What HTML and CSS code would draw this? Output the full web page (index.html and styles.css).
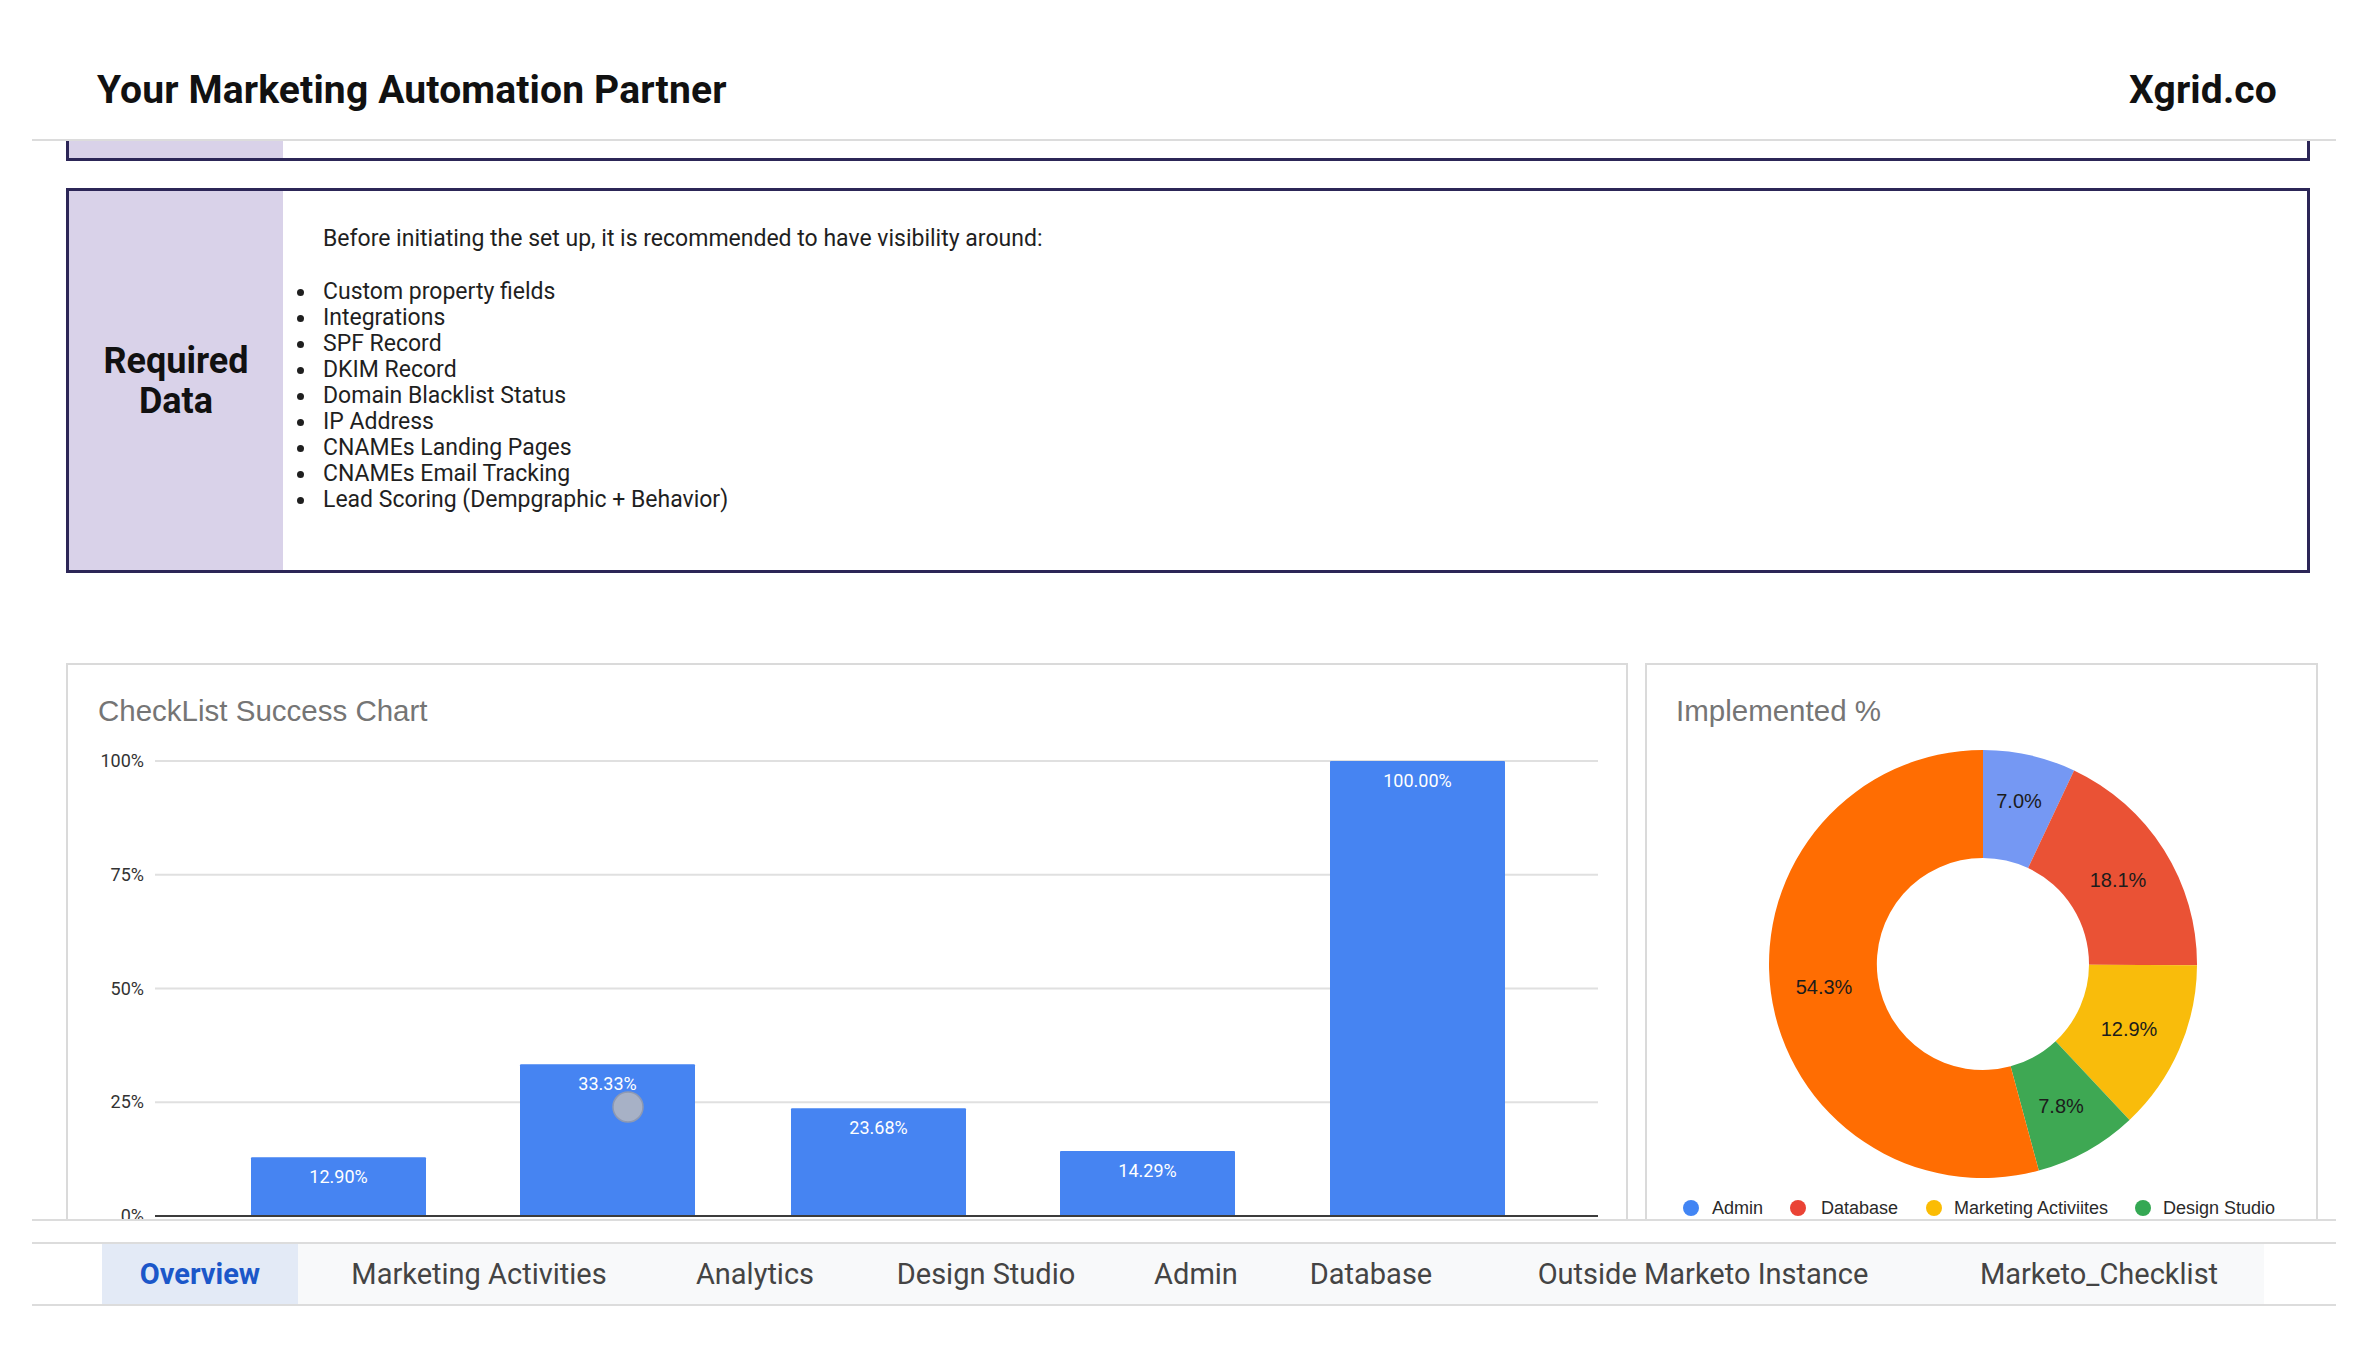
FILE: index.html
```html
<!DOCTYPE html>
<html lang="en">
<head>
<meta charset="utf-8">
<title>Your Marketing Automation Partner</title>
<link rel="stylesheet" href="styles.css">
</head>
<body>
<header class="top">
  <h1 class="top__title">Your Marketing Automation Partner</h1>
  <div class="top__brand">Xgrid.co</div>
</header>

<main class="sheet">
  <div class="box box--cut">
    <div class="box__label"></div>
    <div class="box__body"></div>
  </div>

  <section class="box box--req">
    <div class="box__label"><span>Required<br>Data</span></div>
    <div class="box__body">
      <p class="box__intro">Before initiating the set up, it is recommended to have visibility around:</p>
      <ul class="box__list">
        <li>Custom property fields</li>
        <li>Integrations</li>
        <li>SPF Record</li>
        <li>DKIM Record</li>
        <li>Domain Blacklist Status</li>
        <li>IP Address</li>
        <li>CNAMEs Landing Pages</li>
        <li>CNAMEs Email Tracking</li>
        <li>Lead Scoring (Dempgraphic + Behavior)</li>
      </ul>
    </div>
  </section>

  <div class="charts">
    <section class="card card--bar">
      <h2 class="card__title">CheckList Success Chart</h2>
      <svg class="card__svg" width="1558" height="520" viewBox="0 0 1558 520">
        <g class="grid">
          <line x1="87" y1="32" x2="1530" y2="32"/>
          <line x1="87" y1="145.75" x2="1530" y2="145.75"/>
          <line x1="87" y1="259.5" x2="1530" y2="259.5"/>
          <line x1="87" y1="373.25" x2="1530" y2="373.25"/>
        </g>
        <g class="axis">
          <text x="76" y="38">100%</text>
          <text x="76" y="151.75">75%</text>
          <text x="76" y="265.5">50%</text>
          <text x="76" y="379.25">25%</text>
          <text x="76" y="493">0%</text>
        </g>
        <g class="bars">
          <rect x="183" y="428.3" width="175" height="58.7" rx="1"/>
          <rect x="452" y="335.3" width="175" height="151.7" rx="1"/>
          <rect x="723" y="379.3" width="175" height="107.7" rx="1"/>
          <rect x="992" y="422" width="175" height="65" rx="1"/>
          <rect x="1262" y="32" width="175" height="455" rx="1"/>
        </g>
        <g class="barlabels">
          <text x="270.5" y="454">12.90%</text>
          <text x="539.5" y="361">33.33%</text>
          <text x="810.5" y="405">23.68%</text>
          <text x="1079.5" y="448">14.29%</text>
          <text x="1349.5" y="58">100.00%</text>
        </g>
        <line class="zero" x1="87" y1="487" x2="1530" y2="487"/>
        <circle class="cursor" cx="560" cy="378" r="15"/>
      </svg>
    </section>

    <section class="card card--pie">
      <h2 class="card__title">Implemented %</h2>
      <svg class="card__svg" width="669" height="520" viewBox="0 0 669 520">
        <path class="s-admin" d="M336 21 A214 214 0 0 1 427.1 41.4 L381.1 139.1 A106 106 0 0 0 336 129 Z"/>
        <path class="s-db" d="M427.1 41.4 A214 214 0 0 1 550 236.3 L442 235.7 A106 106 0 0 0 381.1 139.1 Z"/>
        <path class="s-mkt" d="M550 236.3 A214 214 0 0 1 482.5 391 L408.6 312.3 A106 106 0 0 0 442 235.7 Z"/>
        <path class="s-ds" d="M482.5 391 A214 214 0 0 1 391.8 441.6 L363.6 337.3 A106 106 0 0 0 408.6 312.3 Z"/>
        <path class="s-other" d="M391.8 441.6 A214 214 0 1 1 336 21 L336 129 A106 106 0 1 0 363.6 337.3 Z"/>
        <g class="slicelabels">
          <text x="372" y="79">7.0%</text>
          <text x="471" y="158">18.1%</text>
          <text x="482" y="307">12.9%</text>
          <text x="414" y="384">7.8%</text>
          <text x="177" y="265">54.3%</text>
        </g>
        <g class="legend">
          <circle cx="44" cy="479" r="8" fill="#4285f4"/>
          <text x="65" y="485">Admin</text>
          <circle cx="151" cy="479" r="8" fill="#ea4335"/>
          <text x="174" y="485">Database</text>
          <circle cx="287" cy="479" r="8" fill="#fbbc04"/>
          <text x="307" y="485">Marketing Activiites</text>
          <circle cx="496" cy="479" r="8" fill="#34a853"/>
          <text x="516" y="485">Design Studio</text>
        </g>
      </svg>
    </section>
  </div>
</main>

<nav class="tabs">
  <div class="tabs__list">
    <div class="tab tab--active">Overview</div>
    <div class="tab">Marketing Activities</div>
    <div class="tab">Analytics</div>
    <div class="tab">Design Studio</div>
    <div class="tab">Admin</div>
    <div class="tab">Database</div>
    <div class="tab">Outside Marketo Instance</div>
    <div class="tab">Marketo_Checklist</div>
  </div>
</nav>
</body>
</html>
```

FILE: styles.css
```css
* { box-sizing: border-box; }

html, body {
  margin: 0;
  padding: 0;
  background: #ffffff;
  font-family: Roboto, "Liberation Sans", Arial, sans-serif;
  color: #1f1f1f;
}

/* ---------- header ---------- */
.top {
  margin: 0 32px;
  height: 141px;
  padding: 40px 59px 0 65px;
  display: flex;
  align-items: center;
  justify-content: space-between;
  border-bottom: 2px solid #dcdcdc;
}
.top__title,
.top__brand {
  margin: 0;
  font-size: 39px;
  font-weight: 700;
  color: #111111;
  letter-spacing: 0.15px;
}

/* ---------- sheet viewport ---------- */
.sheet {
  margin: 0 32px;
  height: 1080px;
  border-bottom: 2px solid #dcdcdc;
  overflow: hidden;
  padding: 0 18px 0 34px;
}

.box {
  display: grid;
  grid-template-columns: 214px 1fr;
  border: 3px solid #2c2657;
  margin-right: 8px;
  background: #ffffff;
}
.box__label {
  background: #d9d2e9;
  display: flex;
  align-items: center;
  justify-content: center;
  text-align: center;
  font-size: 36px;
  font-weight: 700;
  line-height: 40px;
  color: #111111;
}

.box--cut {
  border-top: 0;
  height: 20px;
}

.box--req {
  margin-top: 27px;
  height: 385px;
}
.box--req .box__body {
  padding: 35px 0 0 40px;
  font-size: 23px;
  line-height: 26px;
  color: #1f1f1f;
}
.box__intro {
  margin: 0 0 27px 0;
}
.box__list {
  margin: 0;
  padding-left: 0;
  list-style: none;
}
.box__list li {
  line-height: 26px;
  position: relative;
}
.box__list li::before {
  content: "";
  position: absolute;
  left: -26px;
  top: 10px;
  width: 7px;
  height: 7px;
  border-radius: 50%;
  background: #1f1f1f;
}

/* ---------- charts ---------- */
.charts {
  margin-top: 90px;
  display: flex;
  gap: 17px;
}
.card {
  border: 2px solid #dadada;
  height: 600px;
  background: #ffffff;
}
.card--bar { width: 1562px; padding-left: 30px; }
.card--pie { width: 673px; padding-left: 29px; }

.card__title {
  margin: 28px 0 0 0;
  font-family: "Liberation Sans", Arial, sans-serif;
  font-size: 29.5px;
  line-height: 36px;
  font-weight: 400;
  color: #757575;
}
.card__svg {
  display: block;
  margin-left: -30px;
}
.card--pie .card__svg { margin-left: -29px; }

.grid line {
  stroke: #e0e0e0;
  stroke-width: 2;
}
.zero {
  stroke: #3c3c3c;
  stroke-width: 2;
}
.axis text {
  font-family: Roboto, "Liberation Sans", sans-serif;
  font-size: 18px;
  fill: #333333;
  text-anchor: end;
}
.bars rect { fill: #4684f2; }
.barlabels text {
  font-family: Roboto, "Liberation Sans", sans-serif;
  font-size: 18px;
  fill: #ffffff;
  text-anchor: middle;
}
.cursor {
  fill: #a7b1c6;
  stroke: #8e99b2;
  stroke-width: 1.5;
}

.s-admin { fill: #7598f3; }
.s-db { fill: #ea5235; }
.s-mkt { fill: #f9bc0b; }
.s-ds { fill: #3ea853; }
.s-other { fill: #ff6d02; }

.slicelabels text {
  font-family: "Liberation Sans", Arial, sans-serif;
  font-size: 20px;
  fill: #1c1c1c;
  text-anchor: middle;
}
.legend text {
  font-family: "Liberation Sans", Arial, sans-serif;
  font-size: 18px;
  fill: #2a2a2a;
}

/* ---------- tabs ---------- */
.tabs {
  margin: 21px 32px 0 32px;
  border-top: 2px solid #dcdcdc;
  border-bottom: 2px solid #dcdcdc;
  height: 64px;
  padding-left: 70px;
}
.tabs__list {
  display: grid;
  grid-template-columns: 196px 362px 190px 272px 148px 202px 462px 330px;
  height: 100%;
  width: max-content;
  background: #f8f9fa;
}
.tab {
  display: flex;
  align-items: center;
  justify-content: center;
  font-size: 29px;
  color: #444444;
  white-space: nowrap;
}
.tab--active {
  background: #e3eaf6;
  color: #1b57c9;
  font-weight: 700;
}
```
